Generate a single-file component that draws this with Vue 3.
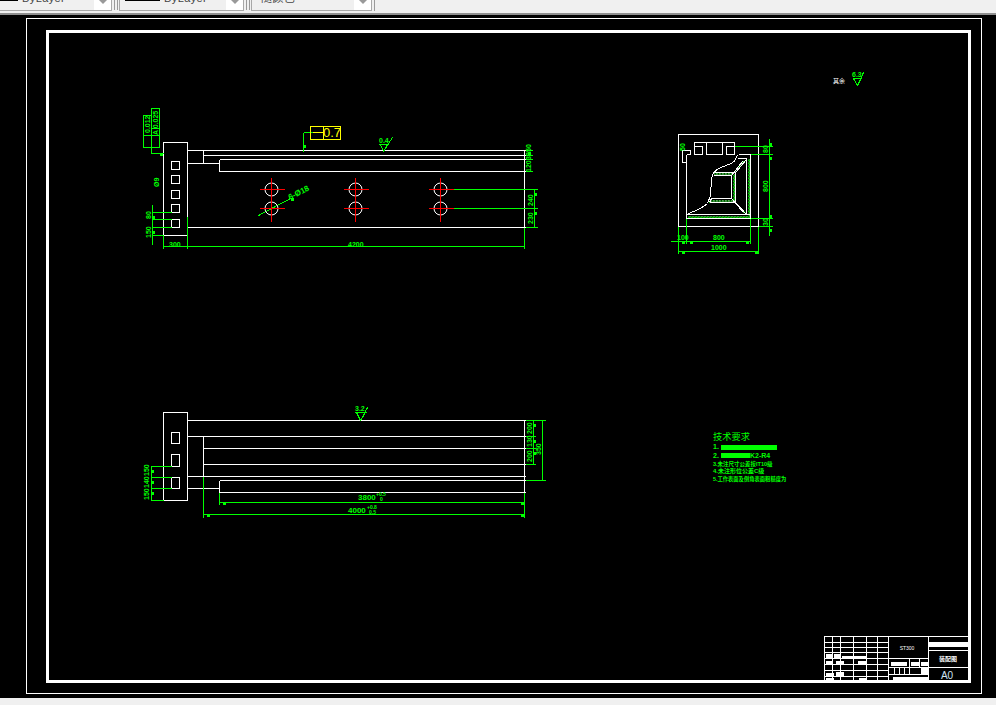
<template>
  <div class="app-window">
    <div class="toolbar">
      <div v-for="box in combos" :key="box.size" class="combo" :class="box.size">
        <span v-if="box.swatch" class="swatch"></span>
        <span class="combo-label">{{ box.label }}</span>
        <span class="combo-arrow"></span>
      </div>
    </div>

    <svg class="drawing" viewBox="0 15 996 683" width="996" height="683">
      <defs>
        <pattern id="hatch" width="3" height="3" patternUnits="userSpaceOnUse">
          <rect width="3" height="3" fill="#000" />
          <rect width="2" height="1" fill="#00ff00" />
          <rect x="1" y="1" width="2" height="1" fill="#00ff00" />
          <rect x="2" y="2" width="1" height="1" fill="#fff" />
        </pattern>
      </defs>

      <g transform="translate(0.5 0.5)">
        <!-- sheet frames -->
        <path class="white" d="M26 18H981V693H26Z" />
        <path class="white heavy" d="M47 31H969V681H47Z" />

        <path class="hatch" d="M687 215H750V218H687Z M747 158H750V218H747Z M713 172H735L731 175H713Z M711 199H732L735 202H709Z M732 175L735 172V202L732 198Z M731 175L742 160H746L735 172Z M732 198L743 212H746L735 202Z" />

        <path class="white" :d="whiteLines" />
        <path class="green" :d="greenLines" />
        <path class="yellow" d="M310 126H340V139H310Z M323 126V139 M312 132H323" />

        <circle v-for="hole in holes" :key="hole.join()" class="hole" :cx="hole[0]" :cy="hole[1]" r="6.5" />
        <path class="red" :d="crossLines" />

        <rect v-for="dot in dots" :key="dot.join()" class="dot" :x="dot[0] - 1" :y="dot[1] - 1" width="3" height="3" />
        <rect v-for="cell in titleGrid" :key="cell.join()" class="cell" :x="cell[0]" :y="cell[1]" :width="cell[2]" :height="cell[3]" />
        <rect v-for="blob in titleBlobs" :key="blob.join()" class="blob" :x="blob[0]" :y="blob[1]" :width="blob[2]" :height="blob[3]" />
        <rect class="bar" x="720" y="444" width="56" height="5" />
        <rect class="bar" x="720" y="452" width="29" height="5" />
      </g>

      <text v-for="dim in dims" :key="dim.text + dim.x + dim.y" class="dim" :class="dim.cls" :x="dim.x" :y="dim.y"
        :transform="dim.rot ? `rotate(${dim.rot} ${dim.x} ${dim.y})` : null">{{ dim.text }}</text>

      <text class="tol-value" x="332" y="137">0.7</text>
      <text class="tech title" x="713" y="440">技术要求</text>
      <text class="tech" x="713" y="449">1.</text>
      <text class="tech" x="713" y="458">2.</text>
      <text class="tech" x="750" y="458">K2-R4</text>
      <text class="tech small" x="713" y="466">3.未注尺寸公差按IT10级</text>
      <text class="tech small row4" x="713" y="473">4.未注形位公差C级</text>
      <text class="tech tiny" x="713" y="481">5.工作表面及倒角表面粗糙度为</text>
      <text class="note" x="833" y="83">其余</text>
      <text class="note mid" x="907" y="650">ST300</text>
      <text class="note mid bold" x="948" y="661">装配图</text>
      <text class="sheet-size" x="947" y="679">A0</text>
    </svg>

    <div class="status-strip"></div>
  </div>
</template>

<script setup>
const combos = [
  { label: "ByLayer", size: "first", swatch: true },
  { label: "ByLayer", size: "second", swatch: true },
  { label: "随颜色", size: "third", swatch: false },
];

const holes = [
  [271, 189], [271, 208],
  [355, 189], [355, 208],
  [440, 189], [440, 208],
];

const crossLines = holes
  .map(([x, y]) => `M${x - 12} ${y}H${x + 13} M${x} ${y - 12}V${y + 13}`)
  .join(" ");

// white outlines, grouped by view
const whiteLines = [
  // front view
  "M163 235V142H187V227 M163 235H187 M187 150H525 M203 155H525 M219 159H525 M219 171H525 M219 159V171",
  "M203 150V163 M187 163H219 M187 227H525 M524 150V227",
  "M171 161H179V169H171Z M171 175H179V183H171Z M171 190H179V198H171Z M171 204H179V212H171Z M171 219H179V227H171Z",
  // plan view
  "M163 412H187V500H163Z M187 420H525 M187 436H525 M203 448H525 M203 464H525 M187 476H525 M219 480H525 M219 492H525 M187 488H219",
  "M203 436V476 M219 480V492 M524 420V492",
  "M171 432H179V443H171Z M171 454H179V466H171Z M171 477H179V488H171Z",
  // section
  "M678 134H758V226H678Z M686 154V218 M686 218H750 M686 214H750 M750 154V218 M746 158V214 M738 154H750",
  "M694 154V142H734V154 M694 146H702V154H694 M706 142V154H722V142 M726 154V146H734V154 M726 154H734",
  "M682 162V150H690V154 M686 154H690 M682 162H686",
  "M686 214L700 208L707 203L710 195L711 178L713 172L718 168L733 162L737 155",
  "M713 172H735 M713 175H731V198H711 M709 202H735 M709 202L711 198 M735 172L746 159 M731 175L742 161 M737 158H746",
  "M735 172V202 M735 202L746 214 M731 198L743 212",
].join(" ");

const greenLines = [
  // front view tolerance frame and dimensions
  "M143 115H151V147H143Z M151 108H159V147H151Z M143 135H159 M151 128H159 M151 147V153H163 M159 135V147",
  "M303 132H312 M303 132V151 M380 144L383 151L387 144 M378 144H388 M383 151L392 137",
  "M258 215L290 198 M152 204V244 M152 212H171 M152 219H171 M152 227H171 M152 235H163",
  "M163 235V248 M187 216V248 M163 246H524 M524 227V248",
  "M453 189H537 M453 208H537 M525 227H537 M534 189V227",
  "M525 150H532 M525 155H532 M525 159H532 M525 171H532",
  // plan view dimensions
  "M150 466H171 M150 477H171 M150 488H171 M150 500H163 M151 466V500",
  "M203 476V517 M219 492V504 M219 502H524 M203 514H524 M524 492V517",
  "M525 420H545 M525 436H535 M525 448H535 M525 464H535 M525 480H545 M533 420V464 M542 420V480",
  "M356 412L360 420L365 412 M354 412H366 M360 420L367 407",
  // section dimensions
  "M734 146H772 M750 154H772 M750 218H772 M758 226H772 M769 138V235",
  "M670 241H750 M686 218V243 M750 218V243 M678 226V253 M758 226V253 M678 251H758",
  "M853 78L857 85L861 78 M853 78H861 M857 85L863 72",
].join(" ");

const dots = [
  [160, 153], [303, 145], [291, 198], [152, 216], [152, 231],
  [534, 193], [534, 212], [528, 152],
  [769, 143], [769, 157], [769, 215], [769, 229],
  [682, 241], [690, 241], [746, 241], [682, 251], [755, 251],
  [151, 470], [151, 481], [151, 492],
  [223, 502], [207, 514], [521, 502], [521, 514],
  [533, 424], [533, 440], [533, 452],
];

const dims = [
  { text: "0.012", x: 150, y: 133, rot: -90 },
  { text: "A 0.025", x: 158, y: 135, rot: -90 },
  { text: "Ø9", x: 159, y: 187, rot: -90 },
  { text: "150", x: 151, y: 238, rot: -90 },
  { text: "80", x: 151, y: 219, rot: -90 },
  { text: "300", x: 169, y: 247 },
  { text: "4200", x: 348, y: 247 },
  { text: "0.4", x: 379, y: 143 },
  { text: "6-Ø18", x: 290, y: 200, rot: -27, cls: "large" },
  { text: "120", x: 531, y: 172, rot: -90 },
  { text: "30", x: 531, y: 160, rot: -90 },
  { text: "50", x: 531, y: 152, rot: -90 },
  { text: "240", x: 533, y: 206, rot: -90 },
  { text: "230", x: 533, y: 224, rot: -90 },
  { text: "80", x: 768, y: 153, rot: -90 },
  { text: "800", x: 768, y: 192, rot: -90 },
  { text: "30", x: 768, y: 226, rot: -90 },
  { text: "50", x: 685, y: 151, rot: -90 },
  { text: "100", x: 677, y: 240 },
  { text: "800", x: 713, y: 240 },
  { text: "1000", x: 711, y: 250 },
  { text: "6.3", x: 852, y: 77 },
  { text: "150", x: 149, y: 500, rot: -90 },
  { text: "140", x: 149, y: 488, rot: -90 },
  { text: "150", x: 149, y: 476, rot: -90 },
  { text: "3.2", x: 355, y: 411 },
  { text: "200", x: 532, y: 434, rot: -90 },
  { text: "130", x: 532, y: 447, rot: -90 },
  { text: "200", x: 532, y: 462, rot: -90 },
  { text: "350", x: 541, y: 455, rot: -90 },
  { text: "3800", x: 358, y: 500, cls: "large" },
  { text: "+0.5", x: 376, y: 496, cls: "tiny-dim" },
  { text: "0", x: 380, y: 501, cls: "tiny-dim" },
  { text: "4000", x: 348, y: 513, cls: "large" },
  { text: "+0.8", x: 367, y: 509, cls: "tiny-dim" },
  { text: "0.5", x: 369, y: 514, cls: "tiny-dim" },
];

// title block: the ruled cells
const titleGrid = [
  ...[824, 832, 840, 853, 866, 877].flatMap((x, i, list) => {
    const right = list[i + 1] || 888;
    return [636, 642, 647, 652, 658, 664, 670, 676].map((y, j, rows) => [
      x, y, right - x, (rows[j + 1] || 680) - y,
    ]);
  }),
  [888, 636, 40, 22], [888, 658, 21, 9], [909, 658, 10, 9], [919, 658, 9, 9],
  [888, 667, 6, 7], [894, 667, 5, 7], [899, 667, 5, 7], [904, 667, 5, 7], [909, 667, 19, 7], [888, 674, 40, 6],
  [928, 636, 40, 14], [928, 650, 40, 17], [928, 667, 40, 13],
];

// small writing in the title block reads as solid patches at this zoom
const titleBlobs = [
  [825, 653, 6, 5], [833, 653, 6, 5], [841, 655, 24, 3],
  [825, 660, 7, 4], [835, 660, 8, 4], [857, 660, 8, 4],
  [825, 672, 8, 3], [835, 671, 8, 4],
  [825, 677, 8, 3], [858, 677, 8, 3],
  [890, 661, 16, 4], [910, 661, 8, 4], [920, 661, 7, 4], [920, 667, 7, 6], [892, 676, 36, 4],
  [928, 641, 40, 5],
];
</script>

<style scoped>
.app-window {
  width: 996px;
  height: 705px;
  display: flex;
  flex-direction: column;
  background: #f0f0f0;
  overflow: hidden;
}

.toolbar {
  height: 13px;
  flex: none;
  display: flex;
  gap: 7px;
  align-items: flex-end;
  overflow: hidden;
  border-bottom: 2px solid #8f8f8f;
  background: #f0f0f0;
}

.combo {
  position: relative;
  height: 10px;
  flex: none;
  display: flex;
  align-items: center;
  margin-bottom: 2px;
  border: 1px solid #a8a8a8;
  border-top: 0;
  background: #f0f0f0;
  font: 11px "Liberation Sans", "Noto Sans CJK SC", sans-serif;
  letter-spacing: 0.4px;
  color: #444;
}

.combo + .combo::before {
  content: "";
  position: absolute;
  top: 0;
  left: -6px;
  width: 2px;
  height: 10px;
  border-left: 1px solid #9a9a9a;
  border-right: 1px solid #9a9a9a;
}

.third::after {
  content: "";
  position: absolute;
  top: 0;
  right: -4px;
  height: 11px;
  border-right: 1px solid #9a9a9a;
}

.first {
  width: 111px;
  border-left: 0;
}

.second {
  width: 123px;
}

.third {
  width: 119px;
}

.swatch {
  position: absolute;
  top: 0;
  left: 0;
  width: 18px;
  height: 1px;
  background: #000;
}

.second .swatch {
  left: 5px;
  width: 35px;
}

.combo-label {
  position: absolute;
  top: -8px;
  left: 22px;
  line-height: 12px;
}

.second .combo-label {
  left: 44px;
}

.third .combo-label {
  left: 9px;
}

.combo-arrow {
  position: absolute;
  top: 0;
  right: 0;
  width: 17px;
  height: 10px;
  background: #fff;
}

.combo-arrow::after {
  content: "";
  position: absolute;
  top: 0;
  left: 5px;
  border: 4px solid transparent;
  border-top: 4px solid #999;
}

.drawing {
  display: block;
  flex: none;
  background: #000;
  shape-rendering: crispEdges;
}

.status-strip {
  flex: 1;
  background: #f0f0f0;
}

.white {
  fill: none;
  stroke: #fff;
  stroke-width: 1;
}

.heavy {
  stroke-width: 2.5;
}

.green {
  fill: none;
  stroke: #00ff00;
  stroke-width: 1;
}

.red {
  fill: none;
  stroke: #ff0000;
  stroke-width: 1;
}

.yellow {
  fill: none;
  stroke: #ffff00;
  stroke-width: 1;
}

.hole {
  fill: none;
  stroke: #fff;
  stroke-width: 1;
  shape-rendering: auto;
}

.hatch {
  fill: url(#hatch);
  stroke: none;
}

.dot,
.bar {
  fill: #00ff00;
}

.cell {
  fill: none;
  stroke: #fff;
  stroke-width: 1;
}

.blob {
  fill: #fff;
}

.dim {
  font: 700 7px "Liberation Sans", sans-serif;
  fill: #00ff00;
}

.large {
  font-size: 8px;
}

.tiny-dim {
  font-size: 5px;
}

.tol-value {
  font: 13px "Liberation Sans", sans-serif;
  fill: #ffff00;
  text-anchor: middle;
}

.tech {
  font: 700 7px "Liberation Sans", "Noto Sans CJK SC", sans-serif;
  fill: #00ff00;
}

.tech.title {
  font-size: 9.25px;
  font-weight: 400;
}

.tech.small {
  font-size: 5.5px;
}

.tech.row4 {
  font-size: 6px;
}

.tech.tiny {
  font-size: 5.3px;
}

.note {
  font: 6px "Liberation Sans", "Noto Sans CJK SC", sans-serif;
  fill: #fff;
}

.mid {
  text-anchor: middle;
  font-size: 5px;
}

.bold {
  font-weight: 700;
  font-size: 6px;
}

.sheet-size {
  font: 10px "Liberation Sans", sans-serif;
  fill: #cfe3f5;
  text-anchor: middle;
}
</style>

<style>
body {
  margin: 0;
  background: #f0f0f0;
}
</style>
